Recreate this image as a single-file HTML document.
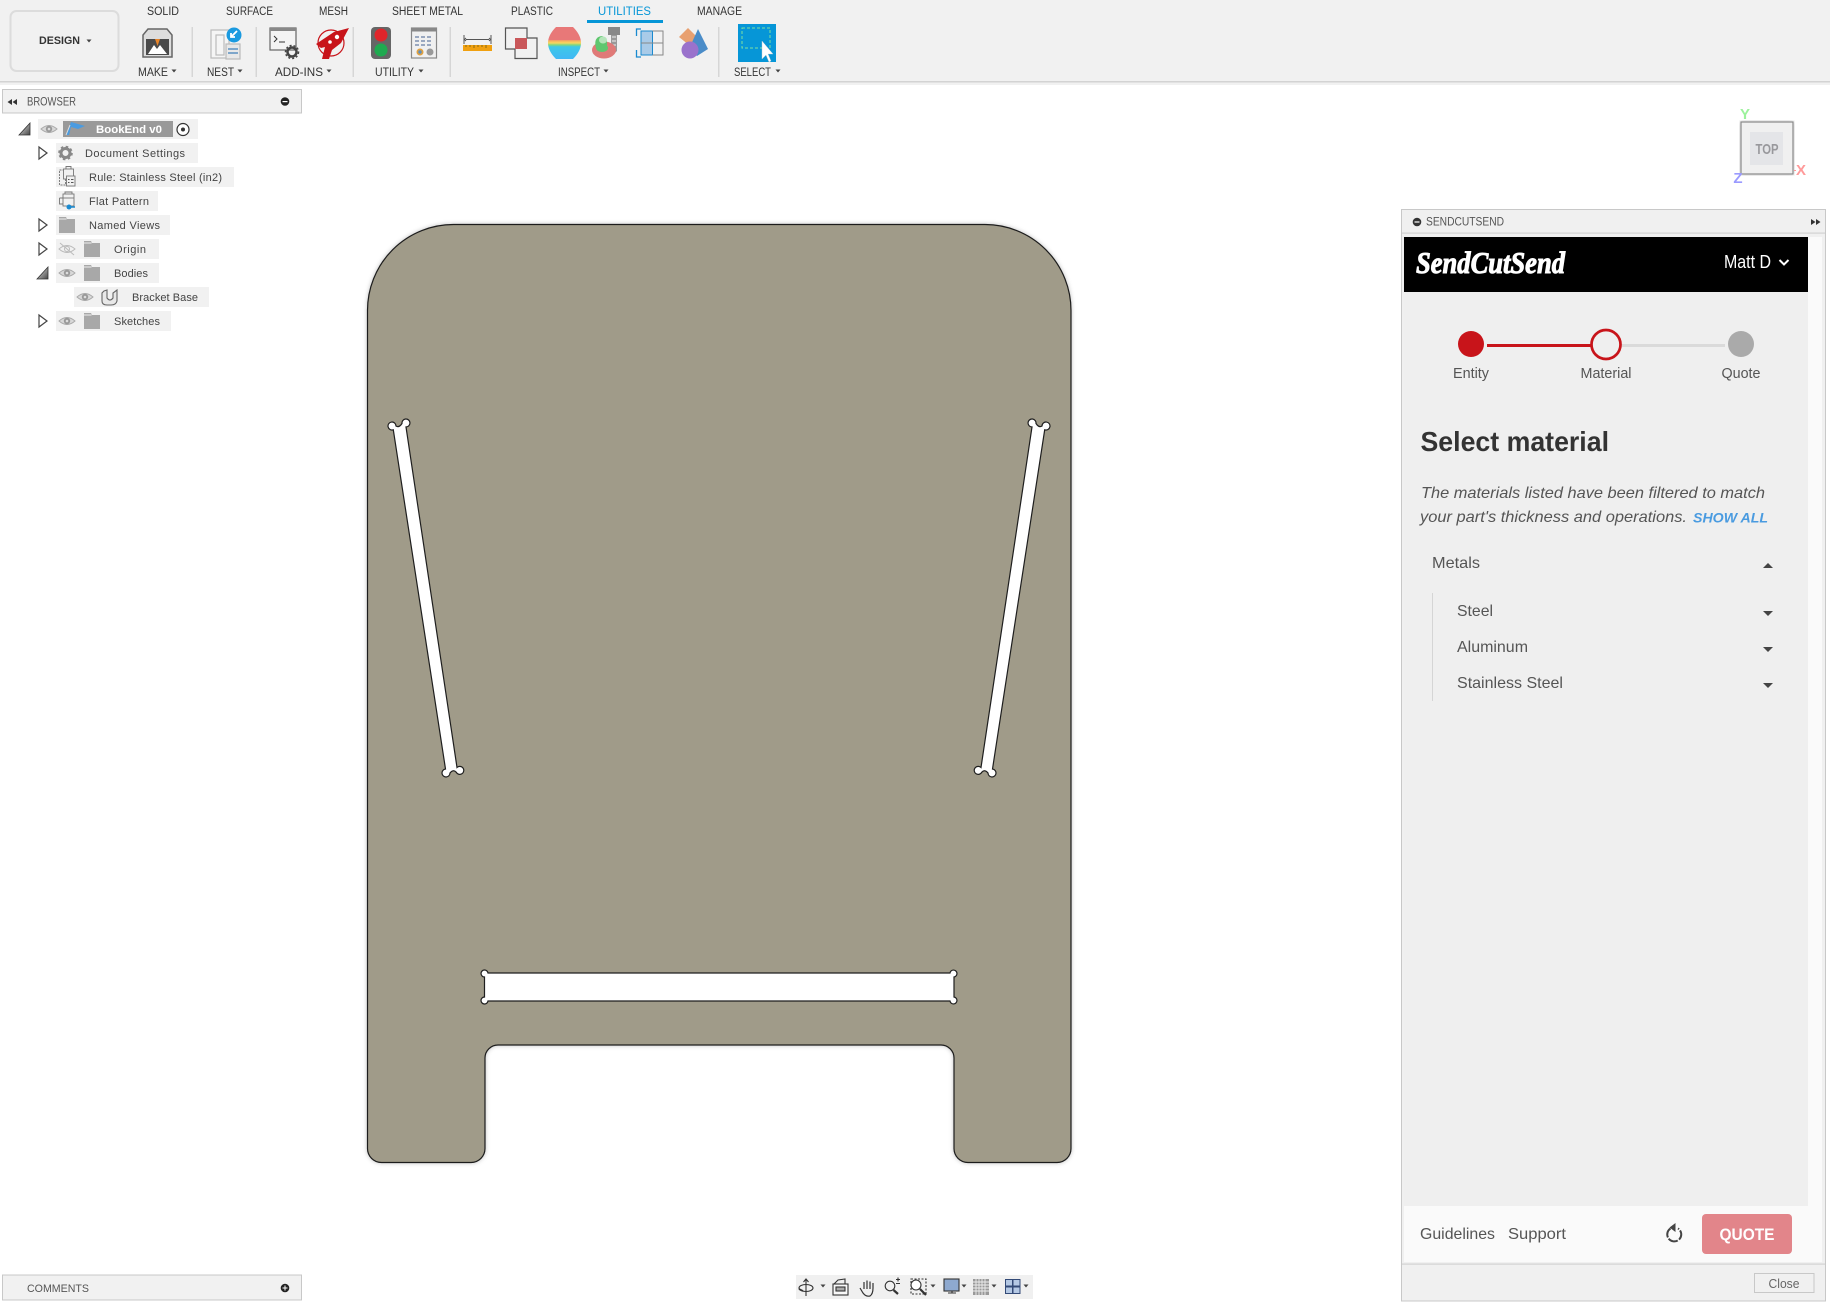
<!DOCTYPE html>
<html><head><meta charset="utf-8"><title>SendCutSend</title>
<style>html,body{margin:0;padding:0;background:#fff;width:1830px;height:1304px;overflow:hidden}svg{display:block}
text{font-family:"Liberation Sans",sans-serif}</style></head><body>
<svg width="1830" height="1304" viewBox="0 0 1830 1304" xmlns="http://www.w3.org/2000/svg">
<defs>
<filter id="ps" x="-3%" y="-3%" width="106%" height="106%"><feDropShadow dx="0" dy="0" stdDeviation="2" flood-color="#000" flood-opacity=".25"/></filter>
<linearGradient id="rb" x1="0" y1="0" x2="0" y2="1"><stop offset="0" stop-color="#e87878"/><stop offset=".4" stop-color="#e87878"/><stop offset=".42" stop-color="#f4a860"/><stop offset=".5" stop-color="#f6d860"/><stop offset=".56" stop-color="#7fd67f"/><stop offset=".62" stop-color="#3ec8e8"/><stop offset="1" stop-color="#3fb8f5"/></linearGradient>
<linearGradient id="tri" x1="0" y1="0" x2="1" y2="1"><stop offset="0" stop-color="#eee"/><stop offset="1" stop-color="#444"/></linearGradient>
<g id="eye"><path d="M-8,0Q0,-7 8,0Q0,7 -8,0Z" fill="#d8d8d8" stroke="#aaa"/><circle r="3.2" fill="#999"/><circle r="1.3" fill="#ddd"/></g>
<g id="fold"><path d="M0,-8H7L8,-6H16V8H0Z" fill="#a8a8a8"/><path d="M0,-6H7.500" stroke="#eee" stroke-width="1"/></g>
<path id="open" d="M0,-6L8,0L0,6Z" fill="#fff" stroke="#444" stroke-width="1.200"/>
<path id="car" d="M-2.500,-1.500H2.500L0,1.500Z" fill="#444"/>
</defs>

<!-- toolbar -->
<rect width="1830" height="85" fill="#f1f1f1"/>
<rect y="81" width="1830" height="1.500" fill="#d3d3d3"/>
<rect x="10.500" y="11" width="108" height="60" rx="6" fill="#f1f1f1" stroke="#dcdcdc" stroke-width="2"/>
<text x="39" y="44" font-size="11" font-weight="700" fill="#333" textLength="41" lengthAdjust="spacingAndGlyphs">DESIGN</text>
<use href="#car" x="89" y="41"/>
<g font-size="11.500" fill="#333">
<text x="147" y="15" textLength="32" lengthAdjust="spacingAndGlyphs">SOLID</text>
<text x="226" y="15" textLength="47" lengthAdjust="spacingAndGlyphs">SURFACE</text>
<text x="319" y="15" textLength="29" lengthAdjust="spacingAndGlyphs">MESH</text>
<text x="392" y="15" textLength="71" lengthAdjust="spacingAndGlyphs">SHEET METAL</text>
<text x="511" y="15" textLength="42" lengthAdjust="spacingAndGlyphs">PLASTIC</text>
<text x="598" y="15" textLength="53" lengthAdjust="spacingAndGlyphs" fill="#0696d7">UTILITIES</text>
<text x="697" y="15" textLength="45" lengthAdjust="spacingAndGlyphs">MANAGE</text>
<text x="138" y="76" textLength="30" lengthAdjust="spacingAndGlyphs">MAKE</text>
<text x="207" y="76" textLength="27" lengthAdjust="spacingAndGlyphs">NEST</text>
<text x="275" y="76" textLength="48" lengthAdjust="spacingAndGlyphs">ADD-INS</text>
<text x="375" y="76" textLength="39" lengthAdjust="spacingAndGlyphs">UTILITY</text>
<text x="558" y="76" textLength="42" lengthAdjust="spacingAndGlyphs">INSPECT</text>
<text x="734" y="76" textLength="37" lengthAdjust="spacingAndGlyphs">SELECT</text>
</g>
<rect x="587" y="20" width="76" height="3" fill="#0696d7"/>
<use href="#car" x="174" y="71"/><use href="#car" x="240" y="71"/><use href="#car" x="329" y="71"/><use href="#car" x="421" y="71"/><use href="#car" x="606" y="71"/><use href="#car" x="778" y="71"/>
<g fill="#d6d6d6"><rect x="191.500" y="27" width="1.500" height="50"/><rect x="255.500" y="27" width="1.500" height="50"/><rect x="352.500" y="27" width="1.500" height="50"/><rect x="449.500" y="27" width="1.500" height="50"/><rect x="718" y="27" width="1.500" height="50"/></g>

<!-- make -->
<path d="M148,29H167L172,35V57H143V35Z" fill="#ddd" stroke="#666" stroke-width="1.500"/>
<rect x="146" y="39" width="23" height="16" fill="#4a4a4a"/>
<path d="M148,54L154,45L157,49L160,45L167,54Z" fill="#fff"/>
<path d="M155,39H160L157.500,46Z" fill="#e8852a"/>
<!-- nest -->
<g fill="#f5f5f5" stroke="#bbb" stroke-width="1.200"><rect x="211" y="30" width="18" height="28"/><rect x="216" y="35" width="8" height="20" fill="none"/><rect x="226" y="44" width="14" height="15" fill="#e8e8e8"/></g>
<path d="M228,49H238M228,53H238" stroke="#5a8fc0" stroke-width="1.500"/>
<circle cx="234" cy="35" r="7.500" fill="#1a9ae0"/><path d="M237,31L231,37M231,33V37H235" stroke="#fff" stroke-width="1.800" fill="none"/>
<!-- add-in -->
<rect x="270" y="28" width="26" height="22" fill="#f4f4f4" stroke="#666" stroke-width="1.200"/>
<rect x="270" y="28" width="26" height="3" fill="#888"/>
<path d="M274,36L277,39L274,42M279,42H285" stroke="#333" fill="none"/>
<circle cx="292" cy="52" r="4.500" fill="none" stroke="#444" stroke-width="2.500"/>
<circle cx="292" cy="52" r="6.500" fill="none" stroke="#444" stroke-width="1.500" stroke-dasharray="2 2"/>
<!-- rocket -->
<circle cx="331" cy="43" r="13" fill="none" stroke="#c8141a" stroke-width="1.200"/>
<path d="M349,28L334,32L316,44L321,48L325,47L322,59L329,59L332,50L341,43Z" fill="#c8141a"/>
<circle cx="337" cy="37" r="2.200" fill="#fff"/><circle cx="330" cy="42" r="1.800" fill="#fff"/>
<!-- traffic -->
<rect x="371" y="27" width="20" height="32" rx="4" fill="#666"/>
<circle cx="381" cy="35" r="6.500" fill="#e0252b"/><circle cx="381" cy="50" r="6.500" fill="#1faa50"/>
<!-- table -->
<rect x="411.500" y="28" width="25" height="30" fill="#f0f0f0" stroke="#888" stroke-width="1.200"/>
<rect x="411.500" y="28" width="25" height="3.500" fill="#888"/>
<path d="M415,37h18M415,41h18M415,45h18" stroke="#9aa8c0" stroke-width="2" stroke-dasharray="4 2"/>
<circle cx="420" cy="52" r="3.500" fill="#e0a040"/><circle cx="420" cy="52" r="1.700" fill="#5a8fc0"/><circle cx="430" cy="52" r="3.500" fill="#999"/>
<!-- ruler -->
<path d="M464,35V44M491,35V44M466,39.500H489" stroke="#555" fill="none"/>
<path d="M466,38L464.500,39.500L466,41M489,38L490.500,39.500L489,41" stroke="#555" fill="none"/>
<rect x="463" y="45" width="29" height="6" fill="#f0a010"/>
<path d="M466,45v2M470,45v2M474,45v3M478,45v2M482,45v2M486,45v3" stroke="#8a6a10"/>
<!-- interference -->
<path d="M527,38V28H505.500V49H515" fill="none" stroke="#555" stroke-width="1.200"/>
<path d="M527,38H537V58.500H515V49" fill="none" stroke="#555" stroke-width="1.200"/>
<rect x="515" y="38" width="12" height="11" fill="#c9575a"/>
<!-- rainbow -->
<path d="M556,27H573Q581,35 581,43Q581,51 573,59H556Q548,51 548,43Q548,35 556,27Z" fill="url(#rb)"/>
<!-- section -->
<rect x="608" y="27" width="12" height="8" fill="#888"/><path d="M611,35H617V51L614,54L611,51Z" fill="#999"/>
<path d="M612,37h4M612,41h4M612,45h4" stroke="#eee"/>
<ellipse cx="604" cy="50" rx="12" ry="8.500" fill="#e07a78"/><ellipse cx="604" cy="50" rx="6" ry="4" fill="#5fc76f" transform="translate(-2 -2)"/>
<path d="M596,48Q593,37 602,36Q608,38 607,46L600,49Z" fill="#5fc76f"/><ellipse cx="603" cy="40" rx="4" ry="3.500" fill="#b5e5ba"/>
<!-- blue section -->
<rect x="641" y="31" width="11.500" height="24" fill="#a9cbe8" stroke="#1a8ad0"/>
<path d="M641,43H663M652.500,31H663V55H652.500" fill="none" stroke="#888"/>
<path d="M641,29H636.500V36M636.500,50V57H641" fill="none" stroke="#1a8ad0" stroke-width="1.300"/>
<!-- shapes -->
<path d="M688,28L697,37L689,45L679,37Z" fill="#e8a070"/>
<path d="M698,29L708,49L697,56L689,49Z" fill="#4a8cc8"/>
<circle cx="690" cy="50" r="8.500" fill="#9a72cc"/>
<!-- select -->
<rect x="738" y="24" width="38" height="38" fill="#0696d7"/>
<rect x="742" y="28" width="28" height="20" fill="none" stroke="#7fe0a0" stroke-dasharray="3 2"/>
<path d="M762,41V59L766,55L769,62L771,61L768,54L773,54Z" fill="#fff" stroke="#ccc" stroke-width=".4"/>

<!-- browser -->
<rect x="2.500" y="89.500" width="299" height="23.500" fill="#f1f1f1" stroke="#c8c8c8"/>
<path d="M12,99V105L7.500,102ZM17,99V105L12.500,102Z" fill="#333"/>
<text x="27" y="105.500" font-size="11.500" fill="#555" textLength="49" lengthAdjust="spacingAndGlyphs">BROWSER</text>
<circle cx="285" cy="101.500" r="4.300" fill="#222"/><rect x="282.500" y="101" width="5" height="1.200" fill="#fff"/>
<g fill="#f1f1f1">
<rect x="38" y="119" width="160" height="20"/>
<rect x="56" y="143" width="142" height="20"/>
<rect x="56" y="167" width="178" height="20"/>
<rect x="56" y="191" width="102" height="20"/>
<rect x="56" y="215" width="114" height="20"/>
<rect x="56" y="239" width="103" height="20"/>
<rect x="56" y="263" width="103" height="20"/>
<rect x="74" y="287" width="135" height="20"/>
<rect x="56" y="311" width="115" height="20"/>
</g>
<rect x="63" y="121" width="110" height="16" fill="#999"/>
<path d="M19,135L30,123V135Z" fill="url(#tri)" stroke="#333" stroke-width=".8"/>
<path d="M37,279L48,267V279Z" fill="url(#tri)" stroke="#333" stroke-width=".8"/>
<use href="#open" x="39" y="153"/><use href="#open" x="39" y="225"/><use href="#open" x="39" y="249"/><use href="#open" x="39" y="321"/>
<g font-size="11" fill="#444">
<text x="96" y="133" fill="#fff" font-weight="700" textLength="66" lengthAdjust="spacingAndGlyphs">BookEnd v0</text>
<text x="85" y="157" textLength="100">Document Settings</text>
<text x="89" y="181" textLength="133">Rule: Stainless Steel (in2)</text>
<text x="89" y="205" textLength="60">Flat Pattern</text>
<text x="89" y="229" textLength="71">Named Views</text>
<text x="114" y="253" textLength="32">Origin</text>
<text x="114" y="277" textLength="34">Bodies</text>
<text x="132" y="301" textLength="66">Bracket Base</text>
<text x="114" y="325" textLength="46">Sketches</text>
</g>
<use href="#eye" x="49" y="129"/><use href="#eye" x="67" y="273"/><use href="#eye" x="85" y="297"/><use href="#eye" x="67" y="321"/>
<path d="M59,249Q67,242 75,249Q67,256 59,249Z" fill="none" stroke="#bbb"/><path d="M60,243L74,255" stroke="#bbb"/><circle cx="67" cy="249" r="2.500" fill="none" stroke="#bbb"/>
<path d="M66,135L71,122L85,126L78,129L71,127L69,135Z" fill="#4a9be0"/><path d="M66,135L70,125" stroke="#ddd"/>
<circle cx="183" cy="129.500" r="6" fill="#fff" stroke="#333" stroke-width="1.200"/><circle cx="183" cy="129.500" r="2" fill="#333"/>
<g transform="translate(65.500 153)"><circle r="4.500" fill="none" stroke="#888" stroke-width="3"/><circle r="6.300" fill="none" stroke="#888" stroke-width="2" stroke-dasharray="2.500 2.450"/></g>
<!-- rule icon -->
<g fill="none" stroke="#777" stroke-width=".9"><rect x="59.500" y="170" width="6" height="15" stroke-dasharray="2 1"/><rect x="63.500" y="169" width="10" height="10" fill="#f1f1f1"/><path d="M66,169V166.500H71V169"/><rect x="66.500" y="176" width="8.500" height="10" fill="#f1f1f1"/></g>
<path d="M68,179.500h1.500M71,179.500h2.500M68,182.500h1.500M71,182.500h2.500" stroke="#555"/>
<!-- flat pattern icon -->
<g fill="none" stroke="#777" stroke-width=".9"><rect x="63" y="194" width="11" height="12"/><path d="M59.500,198H63M59.500,198V204H63M65,194V192H72V194"/><path d="M63,198H74"/></g>
<path d="M68,207H75" stroke="#1a8ad0" stroke-width="1.500"/><circle cx="69" cy="207" r="2.500" fill="#1a8ad0"/>
<use href="#fold" x="59" y="225"/>
<use href="#fold" x="84" y="249"/><use href="#fold" x="84" y="273"/><use href="#fold" x="84" y="321"/>
<path d="M104,291L107,290V298Q110,302 113,298V293L117,290V301Q116,305 111,305H107Q102,305 102,301V293Z" fill="#e8e8e8" stroke="#666" stroke-width="1.100"/>

<!-- part -->
<path filter="url(#ps)" d="M453.500,224.500H985A86,86 0 0 1 1071,310.500V1148.500A14,14 0 0 1 1057,1162.500H968A14,14 0 0 1 954,1148.500V1058A13,13 0 0 0 941,1045H498A13,13 0 0 0 485,1058V1148.500A14,14 0 0 1 471,1162.500H381.500A14,14 0 0 1 367.500,1148.500V310.500A86,86 0 0 1 453.500,224.500Z" fill="#a09b89" stroke="#1e1e1e" stroke-width="1.200"/>
<g fill="#fff" stroke="#1e1e1e" stroke-width="1.200">
<path d="M393.300,429.800A4,4 0 1 1 396,426Q399,428 402,423.500A4,4 0 1 1 406,427L457,767.500A4,4 0 1 1 456.200,772.200Q453,769 450,773A4,4 0 1 1 445.500,769Z"/>
<path d="M393.300,429.800A4,4 0 1 1 396,426Q399,428 402,423.500A4,4 0 1 1 406,427L457,767.500A4,4 0 1 1 456.200,772.200Q453,769 450,773A4,4 0 1 1 445.500,769Z" transform="matrix(-1 0 0 1 1438 0)"/>
<path d="M488,973H950A3.500,3.500 0 1 1 954,977V997A3.500,3.500 0 1 1 950,1001H488A3.500,3.500 0 1 1 484.500,997V977A3.500,3.500 0 1 1 488,973Z"/>
</g>

<!-- viewcube -->
<rect x="1741" y="122" width="52" height="52" fill="#f0f0f0" stroke="#888" stroke-width="1.200" filter="url(#ps)"/>
<rect x="1750" y="132" width="33" height="33" fill="#e4e5e8"/>
<text x="1755.500" y="154" font-size="15" fill="#98989c" font-weight="700" textLength="23" lengthAdjust="spacingAndGlyphs">TOP</text>
<text x="1745" y="119" font-size="15" text-anchor="middle" fill="#9cf29c" font-weight="700">Y</text>
<text x="1801" y="175" font-size="15" text-anchor="middle" fill="#ff9a9a" font-weight="700">X</text>
<text x="1738" y="183" font-size="15" text-anchor="middle" fill="#9a9aff" font-weight="700">Z</text>
<path d="M1794,170.500H1796" stroke="#ff9a9a"/>

<!-- panel -->
<rect x="1401.500" y="209.500" width="424" height="1091.500" fill="#f0f0f0" stroke="#c8c8c8"/>
<rect x="1402" y="232.500" width="423" height="1.200" fill="#d2d2d2"/>
<circle cx="1417" cy="222" r="4.300" fill="#333"/><rect x="1414.500" y="221.400" width="5" height="1.200" fill="#fff"/>
<text x="1426" y="225.500" font-size="12" fill="#555" textLength="78" lengthAdjust="spacingAndGlyphs">SENDCUTSEND</text>
<path d="M1811,219V225L1815.500,222ZM1816,219V225L1820.500,222Z" fill="#333"/>
<rect x="1808" y="237" width="14" height="1025" fill="#fafafa"/>
<rect x="1404" y="292" width="404" height="914" fill="#efefef"/>
<rect x="1404" y="237" width="404" height="55" fill="#000"/>
<text x="1416" y="273" font-size="31" font-style="italic" font-weight="700" fill="#fff" stroke="#fff" stroke-width="1" textLength="149" lengthAdjust="spacingAndGlyphs" style="font-family:'Liberation Serif',serif">SendCutSend</text>
<text x="1724" y="268" font-size="18" fill="#fff" textLength="47" lengthAdjust="spacingAndGlyphs">Matt D</text>
<path d="M1779.500,260L1784,264.500L1788.500,260" fill="none" stroke="#fff" stroke-width="2"/>

<rect x="1487" y="344" width="106" height="3" fill="#c8141a"/>
<rect x="1621" y="344" width="104" height="3" fill="#dadada"/>
<circle cx="1471" cy="344" r="13" fill="#c8141a"/>
<circle cx="1606" cy="344.500" r="14.500" fill="#efefef" stroke="#c8141a" stroke-width="2.700"/>
<circle cx="1741" cy="344" r="13" fill="#aaa"/>
<g font-size="14.500" fill="#555">
<text x="1453" y="378" textLength="36" lengthAdjust="spacingAndGlyphs">Entity</text>
<text x="1580.500" y="378" textLength="51" lengthAdjust="spacingAndGlyphs">Material</text>
<text x="1721.500" y="378" textLength="39" lengthAdjust="spacingAndGlyphs">Quote</text>
</g>
<text x="1420.500" y="451" font-size="27.500" font-weight="700" fill="#333" textLength="188.500" lengthAdjust="spacingAndGlyphs">Select material</text>
<g font-size="16" fill="#555" font-style="italic">
<text x="1421" y="498" textLength="344" lengthAdjust="spacingAndGlyphs">The materials listed have been filtered to match</text>
<text x="1420" y="522" textLength="267" lengthAdjust="spacingAndGlyphs">your part's thickness and operations.</text>
</g>
<text x="1693" y="522.500" font-size="14" font-weight="700" font-style="italic" fill="#4a9be0" textLength="75" lengthAdjust="spacingAndGlyphs">SHOW ALL</text>
<g font-size="16" fill="#555">
<text x="1432" y="568" textLength="48" lengthAdjust="spacingAndGlyphs">Metals</text>
<text x="1457" y="616" textLength="36" lengthAdjust="spacingAndGlyphs">Steel</text>
<text x="1457" y="652" textLength="71" lengthAdjust="spacingAndGlyphs">Aluminum</text>
<text x="1457" y="688" textLength="106" lengthAdjust="spacingAndGlyphs">Stainless Steel</text>
</g>
<rect x="1432" y="593" width="1" height="108" fill="#d5d5d5"/>
<g fill="#444">
<path d="M1763,568H1773L1768,563Z"/>
<path d="M1763,611H1773L1768,616Z"/>
<path d="M1763,647H1773L1768,652Z"/>
<path d="M1763,683H1773L1768,688Z"/>
</g>

<rect x="1404" y="1206" width="404" height="56" fill="#fafafa"/>
<text x="1420" y="1239" font-size="16" fill="#555" textLength="75" lengthAdjust="spacingAndGlyphs">Guidelines</text>
<text x="1508" y="1239" font-size="16" fill="#555" textLength="58" lengthAdjust="spacingAndGlyphs">Support</text>
<path d="M1670.500,1228.500A7,7 0 1 0 1678,1228.500" fill="none" stroke="#444" stroke-width="2" stroke-dasharray="10 1.500"/>
<path d="M1675.500,1223V1232L1669.500,1227.500Z" fill="#444"/>
<rect x="1702" y="1214" width="90" height="40" rx="4" fill="#e2858a"/>
<text x="1719.500" y="1240" font-size="17" font-weight="700" fill="#fff" textLength="55" lengthAdjust="spacingAndGlyphs">QUOTE</text>
<rect x="1402" y="1263.500" width="423" height="1.200" fill="#d2d2d2"/>
<rect x="1754.500" y="1273.500" width="59.500" height="19" fill="#f0f0f0" stroke="#c8c8c8"/>
<text x="1768.500" y="1288" font-size="13" fill="#666" textLength="31" lengthAdjust="spacingAndGlyphs">Close</text>

<!-- comments -->
<rect x="2.500" y="1275" width="299" height="25" fill="#f1f1f1" stroke="#c8c8c8"/>
<text x="27" y="1292" font-size="11" fill="#555" textLength="62" lengthAdjust="spacingAndGlyphs">COMMENTS</text>
<circle cx="285" cy="1288" r="4.300" fill="#222"/><path d="M282.500,1288H287.500M285,1285.500V1290.500" stroke="#fff"/>

<!-- bottom toolbar -->
<rect x="796" y="1275" width="237" height="24" fill="#f0f0f0"/>
<g fill="none" stroke="#333" stroke-width="1.100">
<ellipse cx="806" cy="1288" rx="7" ry="3.500"/><path d="M806,1279V1296M803.500,1282L806,1279L808.500,1282"/><path d="M799,1289L803,1291" stroke-width="1.800"/>
<rect x="833" y="1284" width="15" height="11" fill="#f8f8f8"/><rect x="836" y="1287" width="9" height="4" fill="#aaa"/><path d="M834,1284L838,1280L845,1279V1284"/>
<path d="M860,1288L863,1293Q866,1297 870,1296Q873,1294 873,1288V1283M870,1289V1281.500M867,1289V1280.500M864,1289V1282" stroke-width="1.200"/>
<circle cx="890" cy="1286" r="4.800"/><path d="M893.500,1290L898,1294" stroke-width="2.200"/><path d="M896,1279.500H900M898,1277.500V1281.500M896,1283.500H900"/>
<rect x="911" y="1279" width="15" height="15" stroke-dasharray="2 1.500"/><circle cx="916" cy="1285" r="5" fill="#fff"/><path d="M920,1289L926,1295" stroke-width="2.200"/>
<rect x="944" y="1279" width="15" height="12" fill="#8ea9cf" stroke="#333"/><path d="M948,1293H956M952,1291V1293"/>
</g>
<rect x="973" y="1279" width="16" height="16" fill="#999"/>
<path d="M976,1279V1295M979,1279V1295M982,1279V1295M985,1279V1295M973,1282H989M973,1285H989M973,1288H989M973,1291H989" stroke="#eee" stroke-width=".9"/>
<g fill="#b4c8e4" stroke="#334a77"><rect x="1005.500" y="1279.500" width="7" height="6.500"/><rect x="1013" y="1279.500" width="7" height="6.500"/><rect x="1005.500" y="1287" width="7" height="6.500"/><rect x="1013" y="1287" width="7" height="6.500"/></g>
<use href="#car" x="823" y="1286"/><use href="#car" x="933" y="1286"/><use href="#car" x="964" y="1286"/><use href="#car" x="994" y="1286"/><use href="#car" x="1026" y="1286"/>
</svg>
</body></html>
